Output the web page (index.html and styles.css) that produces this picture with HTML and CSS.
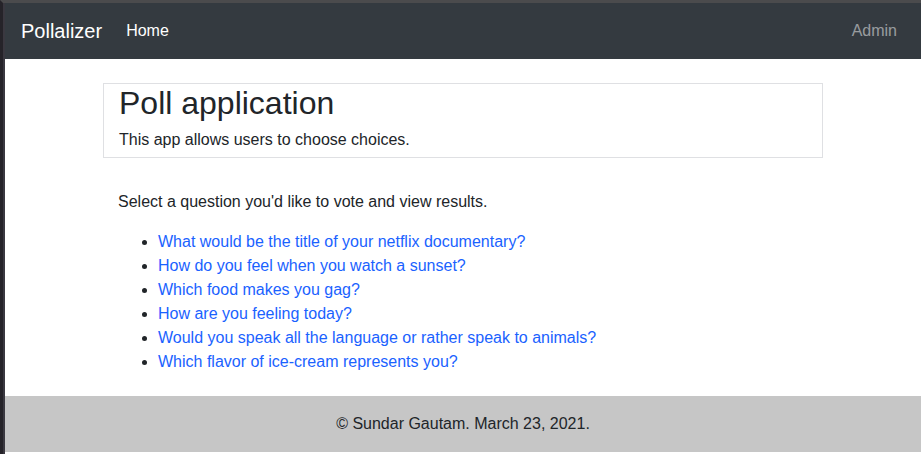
FILE: index.html
```html
<!DOCTYPE html>
<html lang="en">
<head>
<meta charset="utf-8">
<title>Pollalizer</title>
<link rel="stylesheet" href="styles.css">
</head>
<body>
<div class="page">
  <nav class="navbar">
    <div class="nav-left">
      <a class="brand" href="#">Pollalizer</a>
      <a class="nav-link active" href="#">Home</a>
    </div>
    <a class="nav-link muted" href="#">Admin</a>
  </nav>

  <header class="container intro">
    <h1>Poll application</h1>
    <p>This app allows users to choose choices.</p>
  </header>

  <main class="container content">
    <p class="lead-text">Select a question you'd like to vote and view results.</p>
    <ul class="questions">
      <li><a href="#">What would be the title of your netflix documentary?</a></li>
      <li><a href="#">How do you feel when you watch a sunset?</a></li>
      <li><a href="#">Which food makes you gag?</a></li>
      <li><a href="#">How are you feeling today?</a></li>
      <li><a href="#">Would you speak all the language or rather speak to animals?</a></li>
      <li><a href="#">Which flavor of ice-cream represents you?</a></li>
    </ul>
  </main>

  <footer class="footer">© Sundar Gautam. March 23, 2021.</footer>
</div>
</body>
</html>
```

FILE: styles.css
```css
html {
  background: #ffffff;
}
body {
  margin: 0;
  font-family: "Liberation Sans", Arial, sans-serif;
  font-size: 16px;
  line-height: 1.5;
  color: #212529;
  background: #ffffff;
  border-top: 3px solid #4b4b4d;
  border-left: 3px solid #252329;
  min-height: 451px;
}
.page {
  border-left: 2px solid #3a3840;
  min-height: 451px;
}
a {
  text-decoration: none;
}
.navbar {
  display: flex;
  align-items: center;
  justify-content: space-between;
  height: 56px;
  box-sizing: border-box;
  padding: 8px 16px;
  background: #343a40;
}
.nav-left {
  display: flex;
  align-items: center;
}
.brand {
  font-size: 20px;
  line-height: 30px;
  padding: 5px 0;
  margin-right: 16px;
  color: #ffffff;
}
.nav-link {
  padding: 8px;
  line-height: 24px;
  color: #ffffff;
}
.nav-link.muted {
  color: rgba(255, 255, 255, 0.5);
}
.container {
  width: 720px;
  box-sizing: border-box;
  margin-left: auto;
  margin-right: auto;
  padding: 0 15px;
}
.intro {
  margin-top: 24px;
  border: 1px solid #dfe0e3;
  padding-bottom: 5px;
}
.intro h1 {
  margin: 0 0 6px;
  font-size: 32px;
  font-weight: 500;
  line-height: 1.2;
}
.intro p {
  margin: 0;
}
.content {
  padding-top: 32px;
  padding-bottom: 6px;
}
.lead-text {
  margin: 0 0 16px;
}
.questions {
  margin: 0 0 16px;
  padding-left: 40px;
}
.questions a {
  color: #1a62ff;
}
.footer {
  background: #c6c6c6;
  padding: 16px;
  text-align: center;
}
```
